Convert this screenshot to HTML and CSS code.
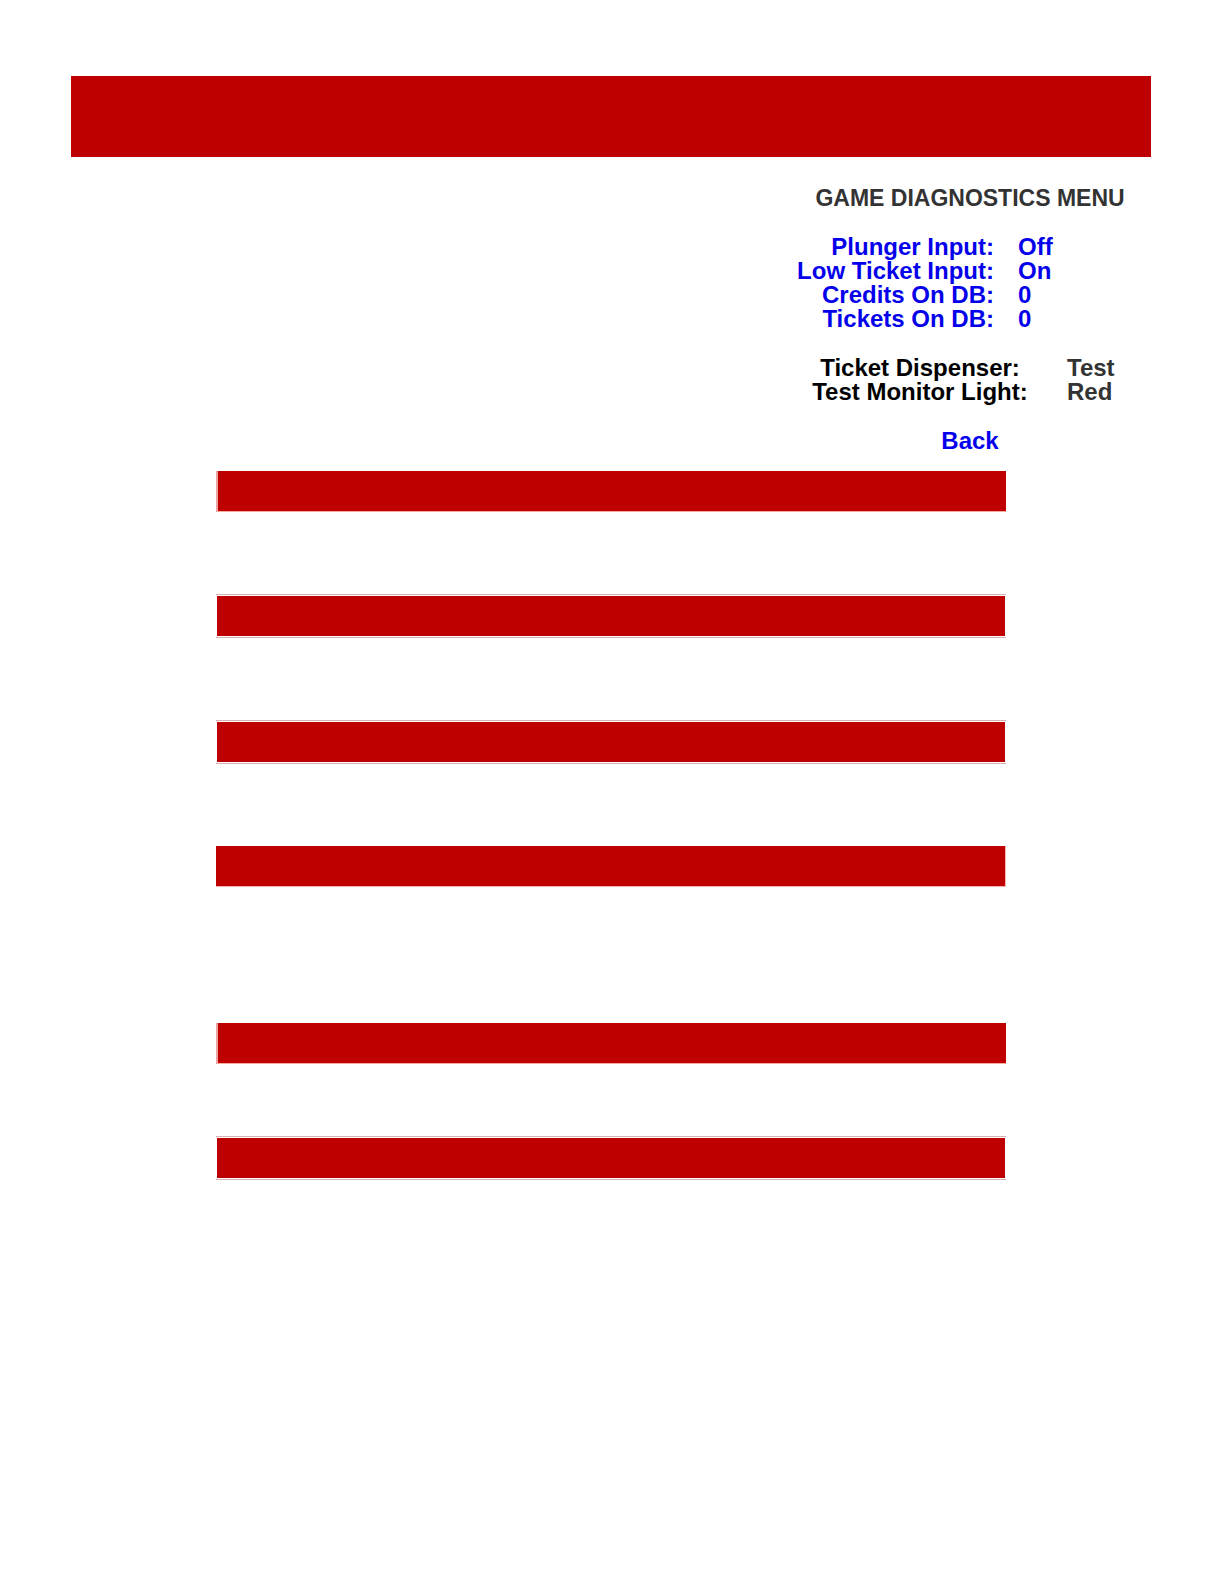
FILE: index.html
```
<!DOCTYPE html>
<html lang="en">
<head>
    <meta charset="utf-8">
    <title>Game Diagnostics Menu</title>
    <link rel="stylesheet" href="styles.css">
</head>
<body>
<header class="banner"></header>

<main>
    <div class="menu">
        <h1>GAME DIAGNOSTICS MENU</h1>

        <table class="status">
            <tr><th scope="row">Plunger Input:</th><td>Off</td></tr>
            <tr><th scope="row">Low Ticket Input:</th><td>On</td></tr>
            <tr><th scope="row">Credits On DB:</th><td>0</td></tr>
            <tr><th scope="row">Tickets On DB:</th><td>0</td></tr>
        </table>

        <div class="tests">
            <label for="dispenser">Ticket Dispenser:</label>
            <button type="button" id="dispenser">Test</button>
            <label for="light">Test Monitor Light:</label>
            <button type="button" id="light">Red</button>
        </div>

        <a class="back" href="#">Back</a>
    </div>

    <!-- section bars -->
    <section><div class="bar edge-left"></div></section>
    <section><div class="bar outlined"></div></section>
    <section><div class="bar outlined"></div></section>
    <section class="tall"><div class="bar edge-right"></div></section>
    <section class="short"><div class="bar edge-left"></div></section>
    <section><div class="bar outlined"></div></section>
</main>
</body>
</html>
```

FILE: styles.css
```
body {
    margin: 0;
    padding: 76px 73px 76px 71px;
    background: #fff;
    font-family: "Liberation Sans", Arial, sans-serif;
    font-size: 24px;
    font-weight: bold;
    line-height: 24px;
}

.banner {
    height: 81px;
    background: #be0000;
}

/* diagnostics menu */
.menu {
    width: 346px;
    margin: 29px 8px 18px auto;
    display: flex;
    flex-direction: column;
    gap: 25px;
}

h1 {
    margin: 0;
    font-size: 23px;
    line-height: 24px;
    text-align: center;
    white-space: nowrap;
    color: #333;
}

.status {
    border-collapse: collapse;
    color: #0500eb;
}

.status th,
.status td {
    padding: 0;
    text-align: left;
}

.status th {
    width: 197px;
    padding-right: 24px;
    text-align: right;
    white-space: nowrap;
}

.tests {
    display: grid;
    grid-template-columns: 246px auto;
    column-gap: 24px;
    color: #000;
}

.tests label {
    text-align: center;
}

.tests button {
    padding: 0;
    border: 0;
    background: none;
    font: inherit;
    text-align: left;
    color: #333;
}

.back {
    align-self: center;
    color: #0500eb;
    text-decoration: none;
}

/* red bars */
section {
    padding-bottom: 82px;
}

section.tall {
    padding-bottom: 136px;
}

section.short {
    padding-bottom: 72px;
}

.bar {
    width: 73%;
    height: 40px;
    margin: 0 auto;
    background: #be0000;
}

.edge-left {
    border-left: 2px solid #eea3a3;
    border-bottom: 1px solid #f5a9a0;
}

.edge-right {
    border-right: 1px solid #f5b5b0;
    border-bottom: 1px solid #f5b5b0;
}

.outlined {
    padding: 1px;
    border-top: 1px solid #dcb0b2;
    border-bottom: 1px solid #dcb0b2;
    background-clip: content-box;
}
```
